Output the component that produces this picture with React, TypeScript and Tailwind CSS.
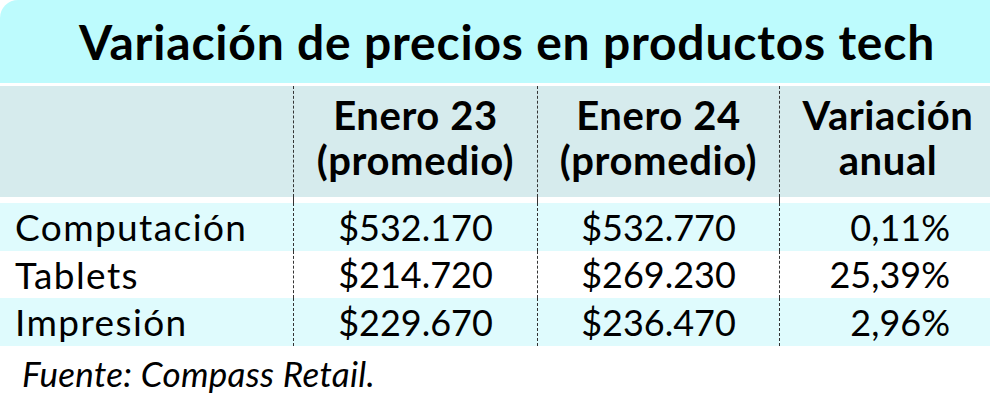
import React from 'react';

const rows = [
  { name: 'Computación', a: '$532.170', b: '$532.770', v: '0,11%', tint: true },
  { name: 'Tablets', a: '$214.720', b: '$269.230', v: '25,39%', tint: false },
  { name: 'Impresión', a: '$229.670', b: '$236.470', v: '2,96%', tint: true },
];

const font = { fontFamily: 'Lato, "Open Sans", sans-serif' };

export default function App() {
  return (
    <div className="w-[995px] h-[402px] bg-white text-black" style={font}>
      <div className="w-[990px]">
        <div className="h-[83px] bg-[#bdfbfd] rounded-tl-[18px] flex items-center justify-center pl-6">
          <h1 className="text-[48px] font-bold leading-none tracking-[0.8px]">
            Variación de precios en productos tech
          </h1>
        </div>

        <div className="mt-[3px] h-[111px] bg-[#d6ebed] grid grid-cols-[293px_244px_242px_211px] text-[40px] font-bold leading-[45px] tracking-[0.6px]">
          <div />
          <div className="border-l border-dashed border-[#333] flex flex-col items-center justify-center pb-[8px]">
            <span>Enero 23</span>
            <span>(promedio)</span>
          </div>
          <div className="border-l border-dashed border-[#333] flex flex-col items-center justify-center pb-[8px]">
            <span>Enero 24</span>
            <span>(promedio)</span>
          </div>
          <div className="border-l border-dashed border-[#333] flex flex-col items-center justify-center pb-[8px] pl-[6px]">
            <span>Variación</span>
            <span>anual</span>
          </div>
        </div>

        <div className="grid grid-cols-[293px_244px_242px_211px] h-[6px]">
          <div />
          <div className="border-l border-dashed border-[#333]" />
          <div className="border-l border-dashed border-[#333]" />
          <div className="border-l border-dashed border-[#333]" />
        </div>

        {rows.map((r) => (
          <div
            key={r.name}
            className={`grid grid-cols-[293px_244px_242px_211px] h-[47.5px] text-[36px] leading-none ${
              r.tint ? 'bg-[#dffbfd]' : 'bg-white'
            }`}
          >
            <div className="flex items-center pl-[15px] text-[37px] tracking-[1.4px]">{r.name}</div>
            <div className="border-l border-dashed border-[#333] flex items-center justify-center">{r.a}</div>
            <div className="border-l border-dashed border-[#333] flex items-center justify-center">{r.b}</div>
            <div className="border-l border-dashed border-[#333] flex items-center justify-end pr-[40px]">{r.v}</div>
          </div>
        ))}
      </div>

      <p className="pl-[22px] pt-[10px] text-[35px] italic leading-none tracking-[0.3px]">Fuente: Compass Retail.</p>
    </div>
  );
}
